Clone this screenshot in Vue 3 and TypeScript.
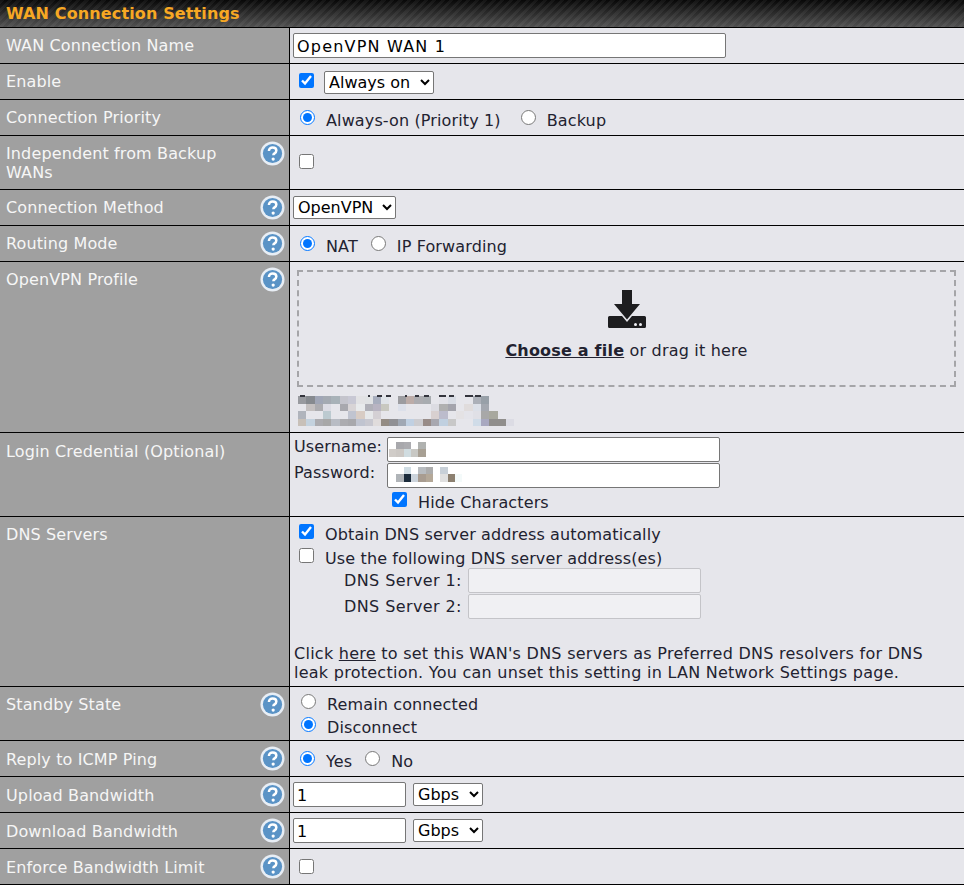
<script setup lang="ts">
const e = '#e6e6eb'
const mosaicColors: string[][] = [
  ['#989a9f','#868a8f','#a0a6b6','#a4aab2','#a8b2b8','#c4c4cc','#c8c8d4','#e2e2e4','#e0e2e4','#a8aebe','#dfe3e8',e,'#9c9ca0','#bcaca8','#acacb0','#a8acb0',e,'#e2e2e8','#d8dce4',e,e,'#acb0b8','#98a0a8'],
  [e,'#c4c0c0','#acacb0','#dcdce4',e,'#a8a8ae','#d8d4d6','#e8eaec','#b0b0b8','#b8b4c2','#c8c8c0',e,'#dce0ea',e,e,e,'#dcdce2','#b0b0b0','#a4a4ac',e,'#e0dcdc','#dce0e8','#a4a8b0'],
  ['#b0b4bc',e,e,'#bccad0',e,e,'#c0c4d0','#d8ccc4','#e6e8ea','#d4d0d4',e,e,e,e,e,e,'#d8d0d0','#bcbccc',e,'#e4e2e4','#e4e4ea','#e0e0e6','#a8a8a8','#a8a89e'],
  ['#c8c0b8','#c4d2de','#acacb0','#a8a8a8','#b8bcc4','#acacb0','#a8a8ac','#c0c4d0','#c8c8d0','#e0dcdc','#948c84','#909094','#a0a8b4','#c0d0e2','#ccccd0','#988c88','#a8a8b0','#c0d0e0','#c8c8c8',e,e,'#d0dce8','#a8a8c0','#908e8c','#908e8c','#dcdce4'],
]
const userMosaic: string[][] = [
  ['#ffffff','#a8a8ac','#acacb0','#ffffff','#b0b2b0','#ffffff','#ffffff'],
  ['#d0ccc8','#ccc8c4','#d0dce0','#c8c8c4','#a8a094','#ffffff','#ffffff'],
]
const passMosaic: string[][] = [
  ['#ffffff','#ffffff','#d0dde4','#ffffff','#b8bcc0','#acacac','#ffffff','#c8d0d8','#ffffff','#ffffff'],
  ['#ffffff','#b0b4b8','#1c2c3c','#ccd4dc','#a89c90','#b4a898','#ffffff','#e0e0e0','#8c8070','#f4fafa'],
]
const specks: [number, number][] = [[2, 5], [70, 2], [79, 5], [88, 5], [107, 2], [117, 4], [126, 5], [141, 7], [151, 5], [167, 8], [177, 6]]
</script>

<template>
  <div class="panel">
    <div class="head">WAN Connection Settings</div>

    <div class="row r36">
      <div class="lab">WAN Connection Name</div>
      <div class="val ctl"><input class="txt name" type="text" value="OpenVPN WAN 1" /></div>
    </div>

    <div class="row r36">
      <div class="lab">Enable</div>
      <div class="val opts">
        <input class="ck up2" type="checkbox" checked />
        <select class="sel sel-on"><option>Always on</option></select>
      </div>
    </div>

    <div class="row r36">
      <div class="lab">Connection Priority</div>
      <div class="val opts">
        <input class="rd" type="radio" name="prio" checked /><span class="t">Always-on (Priority 1)</span>
        <input class="rd far" type="radio" name="prio" /><span class="t">Backup</span>
      </div>
    </div>

    <div class="row r54">
      <div class="lab help">Independent from Backup WANs<svg class="q" viewBox="0 0 26 26"><use href="#qmark" /></svg></div>
      <div class="val opts"><input class="ck up1" type="checkbox" /></div>
    </div>

    <div class="row r36">
      <div class="lab help">Connection Method<svg class="q" viewBox="0 0 26 26"><use href="#qmark" /></svg></div>
      <div class="val ctl"><select class="sel sel-m"><option>OpenVPN</option></select></div>
    </div>

    <div class="row r36">
      <div class="lab help">Routing Mode<svg class="q" viewBox="0 0 26 26"><use href="#qmark" /></svg></div>
      <div class="val opts">
        <input class="rd" type="radio" name="mode" checked /><span class="t">NAT</span>
        <input class="rd next" type="radio" name="mode" /><span class="t">IP Forwarding</span>
      </div>
    </div>

    <div class="row r171">
      <div class="lab help">OpenVPN Profile<svg class="q" viewBox="0 0 26 26"><use href="#qmark" /></svg></div>
      <div class="val col">
        <div class="drop">
          <svg class="dl" viewBox="0 0 38 38" width="38" height="38">
            <path fill="#1d1d1f" d="M14 0h10v14h8L19 29.500 6 14h8z" />
            <path fill="#1d1d1f" d="M1.500 26H14l5 6 5-6h12.500A1.500 1.500 0 0 1 38 27.500v9a1.500 1.500 0 0 1-1.500 1.500h-35A1.500 1.500 0 0 1 0 36.500v-9A1.500 1.500 0 0 1 1.500 26z" />
            <circle cx="27.500" cy="34.500" r="1.500" fill="#f0f0f4" />
            <circle cx="32.500" cy="34.500" r="1.500" fill="#f0f0f4" />
          </svg>
          <div class="droptext"><a class="choose">Choose a file</a> or drag it here</div>
        </div>
        <div class="mosaic">
          <i v-for="(s, k) in specks" :key="k" class="speck" :style="{ left: s[0] + 'px', width: s[1] + 'px' }"></i>
          <div v-for="(line, i) in mosaicColors" :key="i" class="mline">
            <i v-for="(c, j) in line" :key="j" :style="{ background: c }"></i>
          </div>
        </div>
      </div>
    </div>

    <div class="row r84">
      <div class="lab lo">Login Credential (Optional)</div>
      <div class="val cred">
        <div class="credline">
          <span class="credlab">Username:</span>
          <div class="fake">
            <div v-for="(line, i) in userMosaic" :key="i" class="mline small">
              <i v-for="(c, j) in line" :key="j" :style="{ background: c }"></i>
            </div>
          </div>
        </div>
        <div class="credline">
          <span class="credlab">Password:</span>
          <div class="fake pw">
            <div v-for="(line, i) in passMosaic" :key="i" class="mline small">
              <i v-for="(c, j) in line" :key="j" :style="{ background: c }"></i>
            </div>
          </div>
        </div>
        <div class="hide"><input class="ck up3" type="checkbox" checked /><span class="t">Hide Characters</span></div>
      </div>
    </div>

    <div class="row r170">
      <div class="lab">DNS Servers</div>
      <div class="val dns">
        <div class="dline"><input class="ck up3" type="checkbox" checked /><span>Obtain DNS server address automatically</span></div>
        <div class="dline"><input class="ck up3" type="checkbox" /><span>Use the following DNS server address(es)</span></div>
        <div class="srv first"><span>DNS Server 1:</span><input class="txt dis" type="text" disabled /></div>
        <div class="srv"><span>DNS Server 2:</span><input class="txt dis" type="text" disabled /></div>
        <p class="note">Click <a class="lnk">here</a> to set this WAN's DNS servers as Preferred DNS resolvers for DNS leak protection. You can unset this setting in LAN Network Settings page.</p>
      </div>
    </div>

    <div class="row r54">
      <div class="lab help">Standby State<svg class="q" viewBox="0 0 26 26"><use href="#qmark" /></svg></div>
      <div class="val stand">
        <div class="sline"><input class="rd up3" type="radio" name="st" /><span class="t">Remain connected</span></div>
        <div class="sline"><input class="rd up3" type="radio" name="st" checked /><span class="t">Disconnect</span></div>
      </div>
    </div>

    <div class="row r36">
      <div class="lab help lo">Reply to ICMP Ping<svg class="q" viewBox="0 0 26 26"><use href="#qmark" /></svg></div>
      <div class="val opts">
        <input class="rd" type="radio" name="ping" checked /><span class="t">Yes</span>
        <input class="rd next" type="radio" name="ping" /><span class="t">No</span>
      </div>
    </div>

    <div class="row r36">
      <div class="lab help lo">Upload Bandwidth<svg class="q" viewBox="0 0 26 26"><use href="#qmark" /></svg></div>
      <div class="val ctl"><input class="txt num" type="text" value="1" /><select class="sel sel-g"><option>Gbps</option></select></div>
    </div>

    <div class="row r36">
      <div class="lab help lo">Download Bandwidth<svg class="q" viewBox="0 0 26 26"><use href="#qmark" /></svg></div>
      <div class="val ctl"><input class="txt num" type="text" value="1" /><select class="sel sel-g"><option>Gbps</option></select></div>
    </div>

    <div class="row r36 last">
      <div class="lab help lo">Enforce Bandwidth Limit<svg class="q" viewBox="0 0 26 26"><use href="#qmark" /></svg></div>
      <div class="val opts"><input class="ck" type="checkbox" /></div>
    </div>

    <svg width="0" height="0" class="defs">
      <symbol id="qmark" viewBox="0 0 26 26">
        <circle cx="13" cy="13" r="12.500" fill="#e8eef5" />
        <circle cx="13" cy="13" r="10" fill="#5a93c6" />
        <path d="M9.300 10.300c0-2.300 1.700-3.600 3.900-3.600 2.200 0 3.800 1.300 3.800 3.200 0 1.500-.9 2.300-1.900 3-.9.600-1.200 1-1.200 1.900" fill="none" stroke="#fff" stroke-width="2.600" />
        <circle cx="13.700" cy="18.800" r="1.700" fill="#fff" />
      </symbol>
    </svg>
  </div>
</template>

<style>
html, body { margin: 0; background: #000; }
</style>

<style scoped>
.panel {
  width: 964px;
  height: 885px;
  overflow: hidden;
  font-family: "DejaVu Sans", Verdana, sans-serif;
  font-size: 16px;
  line-height: 19px;
  letter-spacing: .13px;
  color: #222230;
  background: #000;
  position: relative;
}
.head {
  height: 27px;
  box-sizing: border-box;
  padding: 4px 0 0 6px;
  margin-bottom: 1px;
  font-weight: 700;
  color: #f7a823;
  background:
    repeating-linear-gradient(135deg, rgba(255,255,255,.05) 0 3px, rgba(255,255,255,0) 3px 6px),
    linear-gradient(#080808, #505050);
}
.row {
  display: grid;
  grid-template-columns: 289px 1fr;
  column-gap: 1px;
  margin-bottom: 1px;
}
.row.last { margin-bottom: 0; }
.r36 { height: 35px; }
.r54 { height: 53px; }
.r171 { height: 170px; }
.r84 { height: 83px; }
.r170 { height: 169px; }
.lab {
  background: #a0a0a0;
  color: #f6f6f6;
  padding: 8px 6px 0;
  position: relative;
}
.lab.lo { padding-top: 9px; }
.lab.help { padding-right: 66px; }
.q {
  position: absolute;
  right: 4px;
  top: 5px;
  width: 25px;
  height: 25px;
}
.val {
  background: #e6e6eb;
  padding-left: 4px;
  display: flex;
  align-items: center;
  min-width: 0;
}
.ctl { padding-left: 3px; }
.opts { padding-left: 9px; }
.ck, .rd { margin: 0; width: 15px; height: 15px; flex: none; }
.rd { margin-left: 1px; }
.up1 { margin-bottom: 2px; }
.up2 { margin-bottom: 3px; }
.up3 { margin-bottom: 6px; }
.t { margin-left: 11px; }
.opts .t { padding-top: 6px; }
.rd.next { margin-left: 13px; }
.rd.far { margin-left: 20px; }
.opts .ck + .sel { margin-left: 10px; margin-top: 1px; }
.txt {
  box-sizing: border-box;
  font: inherit;
  letter-spacing: 1.2px;
  color: #000;
  background: #fff;
  border: 1px solid #767676;
  border-radius: 2px;
  padding: 2px 3px 0;
  height: 25px;
  margin: 0;
}
.name { width: 433px; }
.sel {
  font: inherit;
  color: #000;
  background: #fff;
  border: 1px solid #767676;
  border-radius: 2px;
  height: 23px;
  margin: 0;
}
.sel-on { width: 110px; }
.sel-m { width: 103px; }
.sel-g { width: 70px; margin-left: 7px; }
.num { width: 113px; }
.col { flex-direction: column; align-items: flex-start; padding: 8px 8px 0 7px; }
.drop {
  box-sizing: border-box;
  width: 659px;
  height: 117px;
  border: 2px dashed #a5a5a8;
  display: flex;
  flex-direction: column;
  align-items: center;
  padding-top: 18px;
}
.dl { display: block; }
.droptext { margin-top: 13px; letter-spacing: .2px; }
.choose { font-weight: 700; text-decoration: underline; color: #222230; }
.mosaic { margin: 9px 0 0 1px; position: relative; }
.speck { position: absolute; top: -1px; height: 2px; background: #33343c; }
.mline { display: flex; height: 7.500px; }
.mline i { display: block; width: 8.320px; height: 100%; flex: none; }
.cred { flex-direction: column; align-items: flex-start; padding-top: 4px; }
.credline { display: flex; align-items: flex-start; height: 26px; }
.credlab { width: 93px; flex: none; }
.fake {
  box-sizing: border-box;
  width: 333px;
  height: 25px;
  background: #fff;
  border: 1px solid #767676;
  border-radius: 2px;
  padding: 4px 0 0 1px;
}
.fake.pw { padding-top: 3px; }
.mline.small { height: 7.300px; }
.mline.small i { width: 7.330px; }
.hide { display: flex; align-items: center; padding-left: 98px; height: 26px; }
.dns { flex-direction: column; align-items: flex-start; padding: 5px 0 0 4px; }
.dline { display: flex; align-items: center; height: 24px; padding-left: 5px; }
.dline span { margin-left: 11px; }
.srv { display: flex; align-items: center; height: 25px; margin-bottom: 1px; padding-left: 50px; letter-spacing: .4px; }
.srv.first { margin-top: -2px; }
.srv span { width: 124px; }
.dis { width: 233px; background: #f0f0f3; border-color: #c4c4c8; height: 25px; }
.note { margin: 24px 0 0; width: 640px; letter-spacing: .26px; }
.lnk { text-decoration: underline; color: #222230; }
.stand { flex-direction: column; align-items: flex-start; padding: 6px 0 0 10px; }
.sline { display: flex; align-items: center; height: 23px; }
.defs { position: absolute; }
</style>
